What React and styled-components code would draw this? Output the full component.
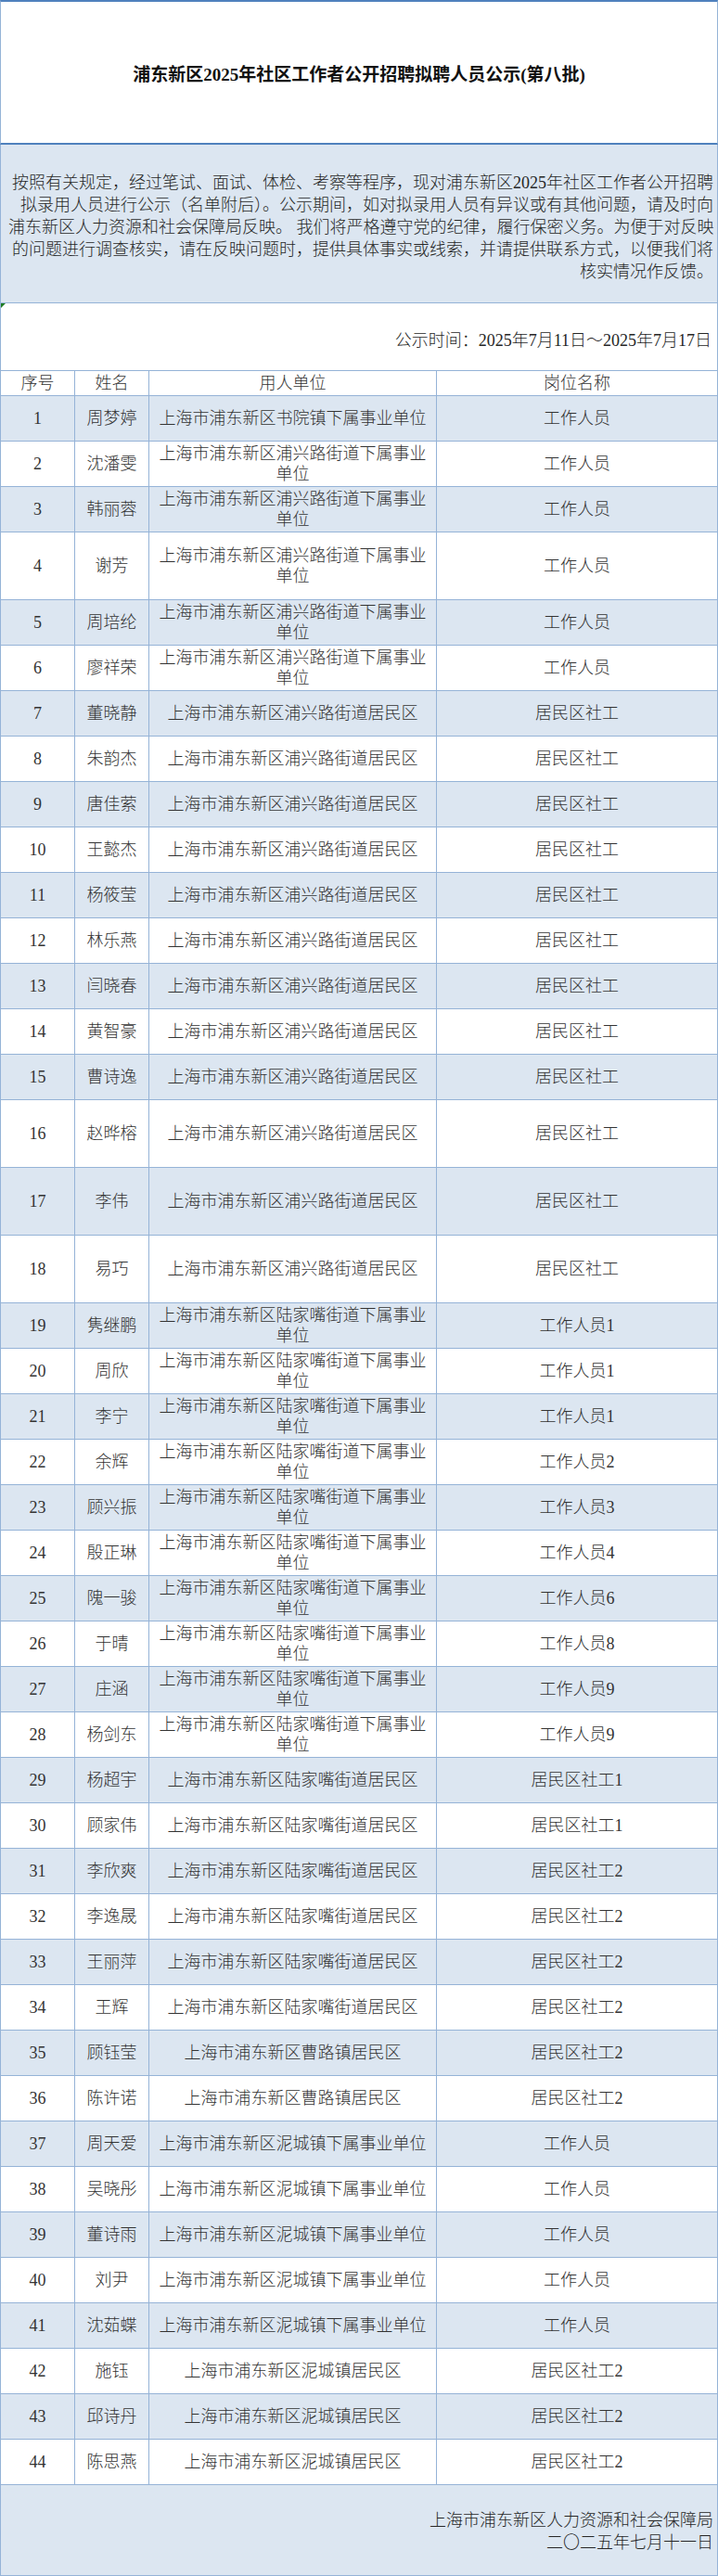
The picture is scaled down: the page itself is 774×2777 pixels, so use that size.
import React from "react";
import styled, { createGlobalStyle } from "styled-components";

const GlobalStyle = createGlobalStyle`
  html, body {
    margin: 0;
    padding: 0;
    background: #ffffff;
  }
  body {
    font-family: "Liberation Serif", "Noto Sans CJK SC", serif;
    color: #262626;
  }
`;

const LINE = "#95b3d7";
const DARK_LINE = "#4f81bd";
const BAND = "#dce6f1";

const Sheet = styled.div`
  width: 774px;
`;

const TitleBox = styled.div`
  box-sizing: border-box;
  height: 156px;
  border-top: 2px solid ${DARK_LINE};
  border-bottom: 2px solid ${DARK_LINE};
  border-left: 1px solid ${LINE};
  border-right: 1px solid ${LINE};
  display: flex;
  align-items: center;
  justify-content: center;
`;

const Title = styled.h1`
  margin: 0;
  font-size: 19px;
  font-weight: 700;
  color: #111;
  letter-spacing: 0;
`;

const IntroBox = styled.div`
  box-sizing: border-box;
  height: 171px;
  padding: 29px 4px 0 8px;
  background: ${BAND};
  border-left: 1px solid ${LINE};
  border-right: 1px solid ${LINE};
  border-bottom: 1px solid ${LINE};
  font-size: 18px;
  line-height: 24px;
  font-weight: 300;
  text-align: right;
  white-space: nowrap;
`;

const DateBar = styled.div`
  position: relative;
  box-sizing: border-box;
  height: 72px;
  padding: 28px 6px 0 0;
  border-left: 1px solid ${LINE};
  border-right: 1px solid ${LINE};
  font-size: 18px;
  line-height: 24px;
  font-weight: 300;
  text-align: right;

  &::before {
    content: "";
    position: absolute;
    left: 0;
    top: 0;
    border-top: 5px solid #1e7b22;
    border-right: 5px solid transparent;
  }
`;

const Table = styled.table`
  width: 774px;
  border-collapse: collapse;
  table-layout: fixed;
  font-size: 18px;
  line-height: 22px;
  font-weight: 300;
  color: #333;
`;

const Row = styled.tr`
  height: ${(p) => (p.$tall ? 73 : 49)}px;
  background: ${(p) => (p.$band ? BAND : "#ffffff")};
`;

const HeadRow = styled.tr`
  height: 27px;
  background: #ffffff;
`;

const HeadCell = styled.th`
  border: 1px solid ${LINE};
  padding: 0 4px;
  font-weight: 300;
  text-align: center;
  vertical-align: middle;
`;

const Cell = styled.td`
  border: 1px solid ${LINE};
  padding: 0 6px;
  text-align: center;
  vertical-align: middle;
  word-break: break-all;
`;

const Footer = styled.div`
  box-sizing: border-box;
  height: 98px;
  padding: 26px 4px 0 0;
  background: ${BAND};
  border-left: 1px solid ${LINE};
  border-right: 1px solid ${LINE};
  border-bottom: 1px solid ${LINE};
  font-size: 18px;
  line-height: 24px;
  font-weight: 300;
  text-align: right;
`;

const PUXING_UNIT = "上海市浦东新区浦兴路街道下属事业单位";
const PUXING_JMQ = "上海市浦东新区浦兴路街道居民区";
const LJZ_UNIT = "上海市浦东新区陆家嘴街道下属事业单位";
const LJZ_JMQ = "上海市浦东新区陆家嘴街道居民区";
const CAOLU_JMQ = "上海市浦东新区曹路镇居民区";
const NICHENG_UNIT = "上海市浦东新区泥城镇下属事业单位";
const NICHENG_JMQ = "上海市浦东新区泥城镇居民区";

const rows = [
  ["周梦婷", "上海市浦东新区书院镇下属事业单位", "工作人员"],
  ["沈潘雯", PUXING_UNIT, "工作人员"],
  ["韩丽蓉", PUXING_UNIT, "工作人员"],
  ["谢芳", PUXING_UNIT, "工作人员", true],
  ["周培纶", PUXING_UNIT, "工作人员"],
  ["廖祥荣", PUXING_UNIT, "工作人员"],
  ["董晓静", PUXING_JMQ, "居民区社工"],
  ["朱韵杰", PUXING_JMQ, "居民区社工"],
  ["唐佳萦", PUXING_JMQ, "居民区社工"],
  ["王懿杰", PUXING_JMQ, "居民区社工"],
  ["杨筱莹", PUXING_JMQ, "居民区社工"],
  ["林乐燕", PUXING_JMQ, "居民区社工"],
  ["闫晓春", PUXING_JMQ, "居民区社工"],
  ["黄智豪", PUXING_JMQ, "居民区社工"],
  ["曹诗逸", PUXING_JMQ, "居民区社工"],
  ["赵晔榕", PUXING_JMQ, "居民区社工", true],
  ["李伟", PUXING_JMQ, "居民区社工", true],
  ["易巧", PUXING_JMQ, "居民区社工", true],
  ["隽继鹏", LJZ_UNIT, "工作人员1"],
  ["周欣", LJZ_UNIT, "工作人员1"],
  ["李宁", LJZ_UNIT, "工作人员1"],
  ["余辉", LJZ_UNIT, "工作人员2"],
  ["顾兴振", LJZ_UNIT, "工作人员3"],
  ["殷正琳", LJZ_UNIT, "工作人员4"],
  ["隗一骏", LJZ_UNIT, "工作人员6"],
  ["于晴", LJZ_UNIT, "工作人员8"],
  ["庄涵", LJZ_UNIT, "工作人员9"],
  ["杨剑东", LJZ_UNIT, "工作人员9"],
  ["杨超宇", LJZ_JMQ, "居民区社工1"],
  ["顾家伟", LJZ_JMQ, "居民区社工1"],
  ["李欣爽", LJZ_JMQ, "居民区社工2"],
  ["李逸晟", LJZ_JMQ, "居民区社工2"],
  ["王丽萍", LJZ_JMQ, "居民区社工2"],
  ["王辉", LJZ_JMQ, "居民区社工2"],
  ["顾钰莹", CAOLU_JMQ, "居民区社工2"],
  ["陈许诺", CAOLU_JMQ, "居民区社工2"],
  ["周天爱", NICHENG_UNIT, "工作人员"],
  ["吴晓彤", NICHENG_UNIT, "工作人员"],
  ["董诗雨", NICHENG_UNIT, "工作人员"],
  ["刘尹", NICHENG_UNIT, "工作人员"],
  ["沈茹蝶", NICHENG_UNIT, "工作人员"],
  ["施钰", NICHENG_JMQ, "居民区社工2"],
  ["邱诗丹", NICHENG_JMQ, "居民区社工2"],
  ["陈思燕", NICHENG_JMQ, "居民区社工2"],
];

const App = () => {
  return (
    <Sheet>
      <GlobalStyle />
      <TitleBox>
        <Title>浦东新区2025年社区工作者公开招聘拟聘人员公示(第八批)</Title>
      </TitleBox>
      <IntroBox>
        按照有关规定，经过笔试、面试、体检、考察等程序，现对浦东新区2025年社区工作者公开招聘
        <br />
        拟录用人员进行公示（名单附后）。公示期间，如对拟录用人员有异议或有其他问题，请及时向
        <br />
        浦东新区人力资源和社会保障局反映。 我们将严格遵守党的纪律，履行保密义务。为便于对反映
        <br />
        的问题进行调查核实，请在反映问题时，提供具体事实或线索，并请提供联系方式，以便我们将
        <br />
        核实情况作反馈。
      </IntroBox>
      <DateBar>公示时间：2025年7月11日～2025年7月17日</DateBar>
      <Table>
        <colgroup>
          <col style={{ width: "80px" }} />
          <col style={{ width: "80px" }} />
          <col style={{ width: "310px" }} />
          <col />
        </colgroup>
        <thead>
          <HeadRow>
            <HeadCell>序号</HeadCell>
            <HeadCell>姓名</HeadCell>
            <HeadCell>用人单位</HeadCell>
            <HeadCell>岗位名称</HeadCell>
          </HeadRow>
        </thead>
        <tbody>
          {rows.map(([name, unit, post, tall], i) => (
            <Row key={i} $band={i % 2 === 0} $tall={tall}>
              <Cell>{i + 1}</Cell>
              <Cell>{name}</Cell>
              <Cell>{unit}</Cell>
              <Cell>{post}</Cell>
            </Row>
          ))}
        </tbody>
      </Table>
      <Footer>
        上海市浦东新区人力资源和社会保障局
        <br />
        二〇二五年七月十一日
      </Footer>
    </Sheet>
  );
};

export default App;
